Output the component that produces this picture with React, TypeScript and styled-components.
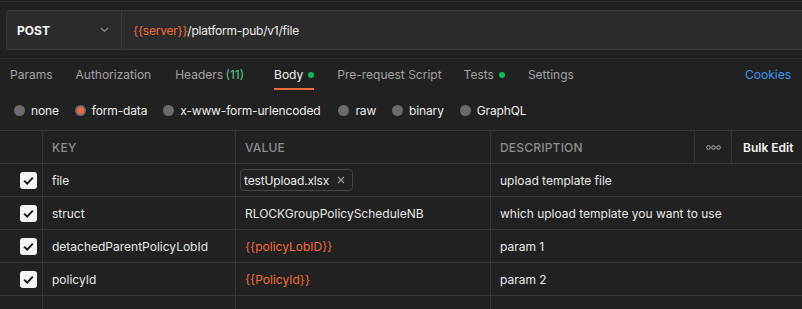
import React from "react";
import styled, { createGlobalStyle } from "styled-components";

const GlobalStyle = createGlobalStyle`
  body {
    margin: 0;
    background: #212121;
    font-family: Inter, "Noto Sans", sans-serif;
    font-size: 12px;
    color: #e6e6e6;
    overflow: hidden;
  }
`;

const Page = styled.div`
  width: 802px;
  height: 309px;
  padding-top: 1px;
  box-sizing: border-box;
  overflow: hidden;
`;

const RequestArea = styled.div`
  border-top: 1px solid #303030;
  border-bottom: 1px solid #303030;
  padding: 8px 0 8px 6px;
  display: flex;
`;

const RequestBox = styled.div`
  display: flex;
  height: 40px;
  flex: 1;
  margin-right: -4px;
  border: 1px solid #3a3a3a;
  border-radius: 3px;
  background: #2b2b2b;
  box-sizing: border-box;
`;

const MethodSelect = styled.div`
  width: 115px;
  display: flex;
  align-items: center;
  justify-content: space-between;
  padding: 0 12px 0 10px;
  box-sizing: border-box;
  border-right: 1px solid #3a3a3a;
  font-weight: 700;
  color: #f5f5f5;
  font-size: 12px;
`;

const UrlInput = styled.div`
  flex: 1;
  display: flex;
  align-items: center;
  padding-left: 11px;
  color: #ededed;
  font-size: 12px;
  letter-spacing: -0.22px;
`;

const Var = styled.span`
  color: #f26b3a;
`;

const TabBar = styled.div`
  display: flex;
  align-items: stretch;
  height: 31px;
  padding: 0 10px;
`;

const Tab = styled.div<{ $active?: boolean; $gap: number }>`
  display: flex;
  align-items: center;
  gap: 5px;
  margin-right: ${(p) => p.$gap}px;
  color: ${(p) => (p.$active ? "#f2f2f2" : "#a3a3a3")};
  font-size: 12px;
  box-sizing: border-box;
  padding-top: 2px;
  border-bottom: 2px solid ${(p) => (p.$active ? "#f26b3a" : "transparent")};
`;

const Count = styled.span`
  color: #5fc88a;
  margin-left: -1px;
`;

const Dot = styled.span`
  width: 6px;
  height: 6px;
  border-radius: 50%;
  background: #0cbb52;
`;

const CookiesLink = styled.div`
  margin-left: auto;
  display: flex;
  align-items: center;
  color: #3d94ea;
  font-size: 12px;
  padding-right: 1px;
`;

const RadioRow = styled.div`
  display: flex;
  align-items: center;
  height: 40px;
  padding-left: 14px;
`;

const RadioOption = styled.label<{ $gap: number }>`
  display: flex;
  align-items: center;
  gap: 6px;
  margin-right: ${(p) => p.$gap}px;
  color: #ececec;
  font-size: 12px;
  letter-spacing: -0.15px;
`;

const RadioCircle = styled.span<{ $checked?: boolean }>`
  width: 11px;
  height: 11px;
  border-radius: 50%;
  background: #6b6b6b;
  display: flex;
  align-items: center;
  justify-content: center;
  &::after {
    content: "";
    width: 7px;
    height: 7px;
    border-radius: 50%;
    background: ${(p) => (p.$checked ? "#f26b3a" : "transparent")};
  }
`;

const Table = styled.div`
  border-top: 1px solid #353535;
  display: grid;
  grid-template-columns: 43px 193px 255px 204px 37px 1fr;
  grid-auto-rows: 33px;
`;

const Cell = styled.div<{ $last?: boolean }>`
  display: flex;
  align-items: center;
  padding-left: 9px;
  border-bottom: 1px solid #353535;
  border-right: ${(p) => (p.$last ? "none" : "1px solid #353535")};
  white-space: nowrap;
  overflow: hidden;
  color: #e8e8e8;
  font-size: 12px;
`;

const HeadCell = styled(Cell)`
  color: #8e8e8e;
  font-weight: 500;
  letter-spacing: 0.2px;
`;

const CheckCell = styled(Cell)`
  justify-content: flex-end;
  padding: 0 5px 0 0;
`;

const DotsCell = styled(Cell)`
  justify-content: center;
  padding: 0;
  color: #bdbdbd;
`;

const BulkEdit = styled(Cell)`
  padding-left: 11px;
  color: #f5f5f5;
  font-weight: 600;
`;

const Checkbox = styled.span`
  width: 17px;
  height: 17px;
  border-radius: 3px;
  background: #f4f4f4;
  display: flex;
  align-items: center;
  justify-content: center;
`;

const VarText = styled.span`
  color: #f26b3a;
`;

const FileChip = styled.div`
  display: flex;
  align-items: center;
  gap: 8px;
  height: 20px;
  margin-left: -5px;
  padding: 0 7px 0 3px;
  border: 1px solid #454545;
  border-radius: 4px;
  color: #ececec;
  letter-spacing: -0.15px;
`;

const Chevron = () => (
  <svg width="9" height="6" viewBox="0 0 9 6" fill="none">
    <path d="M1 1l3.5 3.5L8 1" stroke="#8a8a8a" strokeWidth="1.2" />
  </svg>
);

const Check = () => (
  <svg width="11" height="9" viewBox="0 0 11 9" fill="none">
    <path d="M1.2 4.6l3 3L9.8 1.6" stroke="#1c1c1c" strokeWidth="2" />
  </svg>
);

const CloseX = () => (
  <svg width="8" height="8" viewBox="0 0 8 8" fill="none">
    <path d="M1 1l6 6M7 1L1 7" stroke="#a0a0a0" strokeWidth="1.1" />
  </svg>
);

const Dots = () => (
  <svg width="15" height="5" viewBox="0 0 15 5" fill="none">
    <circle cx="2.5" cy="2.5" r="1.8" stroke="#bdbdbd" strokeWidth="0.9" />
    <circle cx="7.5" cy="2.5" r="1.8" stroke="#bdbdbd" strokeWidth="0.9" />
    <circle cx="12.5" cy="2.5" r="1.8" stroke="#bdbdbd" strokeWidth="0.9" />
  </svg>
);

const tabs = [
  { label: "Params", gap: 23 },
  { label: "Authorization", gap: 24 },
  { label: "Headers", count: "(11)", gap: 30 },
  { label: "Body", active: true, dot: true, gap: 23 },
  { label: "Pre-request Script", gap: 22 },
  { label: "Tests", dot: true, gap: 23 },
  { label: "Settings", gap: 0 },
];

const radios = [
  { label: "none", gap: 16 },
  { label: "form-data", checked: true, gap: 16 },
  { label: "x-www-form-urlencoded", gap: 18 },
  { label: "raw", gap: 16 },
  { label: "binary", gap: 16 },
  { label: "GraphQL", gap: 0 },
];

type Row = { key: string; value: React.ReactNode; desc: string };

const rows: Row[] = [
  {
    key: "file",
    value: (
      <FileChip>
        testUpload.xlsx
        <CloseX />
      </FileChip>
    ),
    desc: "upload template file",
  },
  { key: "struct", value: "RLOCKGroupPolicyScheduleNB", desc: "which upload template you want to use" },
  { key: "detachedParentPolicyLobId", value: <VarText>{"{{policyLobID}}"}</VarText>, desc: "param 1" },
  { key: "policyId", value: <VarText>{"{{PolicyId}}"}</VarText>, desc: "param 2" },
];

const App: React.FC = () => {
  return (
    <Page>
      <GlobalStyle />
      <RequestArea>
        <RequestBox>
          <MethodSelect>
            POST
            <Chevron />
          </MethodSelect>
          <UrlInput>
            <Var>{"{{server}}"}</Var>/platform-pub/v1/file
          </UrlInput>
        </RequestBox>
      </RequestArea>

      <TabBar>
        {tabs.map((t) => (
          <Tab key={t.label} $active={t.active} $gap={t.gap}>
            <span>
              {t.label}
              {t.count && <Count> {t.count}</Count>}
            </span>
            {t.dot && <Dot />}
          </Tab>
        ))}
        <CookiesLink>Cookies</CookiesLink>
      </TabBar>

      <RadioRow>
        {radios.map((r) => (
          <RadioOption key={r.label} $gap={r.gap}>
            <RadioCircle $checked={r.checked} />
            {r.label}
          </RadioOption>
        ))}
      </RadioRow>

      <Table>
        <HeadCell />
        <HeadCell>KEY</HeadCell>
        <HeadCell>VALUE</HeadCell>
        <HeadCell>DESCRIPTION</HeadCell>
        <DotsCell>
          <Dots />
        </DotsCell>
        <BulkEdit $last>Bulk Edit</BulkEdit>

        {rows.map((r) => (
          <React.Fragment key={r.key}>
            <CheckCell>
              <Checkbox>
                <Check />
              </Checkbox>
            </CheckCell>
            <Cell>{r.key}</Cell>
            <Cell>{r.value}</Cell>
            <Cell style={{ gridColumn: "span 3" }} $last>
              {r.desc}
            </Cell>
          </React.Fragment>
        ))}
        <CheckCell />
        <Cell />
        <Cell />
        <Cell style={{ gridColumn: "span 3" }} $last />
      </Table>
    </Page>
  );
};

export default App;
